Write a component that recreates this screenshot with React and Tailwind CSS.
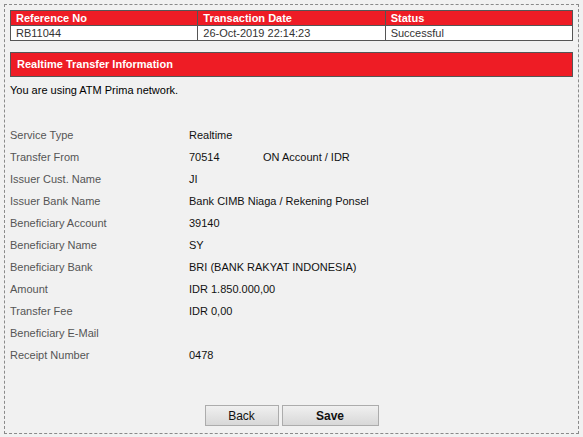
import React from 'react'

const rows = [
  ['Service Type', 'Realtime'],
  ['Transfer From', 'from'],
  ['Issuer Cust. Name', 'JI'],
  ['Issuer Bank Name', 'Bank CIMB Niaga / Rekening Ponsel'],
  ['Beneficiary Account', '39140'],
  ['Beneficiary Name', 'SY'],
  ['Beneficiary Bank', 'BRI (BANK RAKYAT INDONESIA)'],
  ['Amount', 'IDR 1.850.000,00'],
  ['Transfer Fee', 'IDR 0,00'],
  ['Beneficiary E-Mail', ''],
  ['Receipt Number', '0478'],
]

export default function App() {
  return (
    <div className="w-[583px] h-[437px] bg-[#f1f1f1] p-[4px] text-[11px] font-[Liberation_Sans,Arial,sans-serif]">
      <div className="h-[430px] border border-dashed border-[#8a8a8a] px-[5px] pt-[5px] flex flex-col">
        {/* summary table */}
        <table className="w-full border-collapse border border-[#555] table-fixed">
          <thead>
            <tr className="bg-[#ee1c25] text-white font-bold text-left h-[15px]">
              <th className="border border-[#555] px-[5px] py-0 leading-[14px]">Reference No</th>
              <th className="border border-[#555] px-[5px] py-0 leading-[14px]">Transaction Date</th>
              <th className="border border-[#555] px-[5px] py-0 leading-[14px]">Status</th>
            </tr>
          </thead>
          <tbody>
            <tr className="bg-white text-[#333]">
              <td className="border border-[#555] px-[5px] py-0 leading-[14px]">RB11044</td>
              <td className="border border-[#555] px-[5px] py-0 leading-[14px]">26-Oct-2019 22:14:23</td>
              <td className="border border-[#555] px-[5px] py-0 leading-[14px]">Successful</td>
            </tr>
          </tbody>
        </table>

        <div className="mt-[11px] h-[25px] bg-[#ee1c25] border border-[#555] flex items-center px-[6px] text-white font-bold">
          Realtime Transfer Information
        </div>

        <div className="mt-[6px] text-black leading-[15px]">You are using ATM Prima network.</div>

        <div className="mt-[26px] flex flex-col">
          {rows.map(([label, value]) => (
            <div key={label} className="flex h-[22px] items-center">
              <div className="w-[179px] text-[#555]">{label}</div>
              {value === 'from' ? (
                <div className="flex text-[#111]">
                  <span className="w-[74px]">70514</span>
                  <span>ON Account / IDR</span>
                </div>
              ) : (
                <div className="text-[#111]">{value}</div>
              )}
            </div>
          ))}
        </div>

        <div className="mt-auto mb-[7px] flex justify-center gap-[3px]">
          <button className="w-[74px] h-[21px] border border-[#acacac] bg-gradient-to-b from-[#f0f0f0] to-[#d8d8d8] text-[#111] text-[12px]">
            Back
          </button>
          <button className="w-[97px] h-[21px] border border-[#acacac] bg-gradient-to-b from-[#f0f0f0] to-[#d8d8d8] text-[#111] text-[12px] font-bold">
            Save
          </button>
        </div>
      </div>
    </div>
  )
}
